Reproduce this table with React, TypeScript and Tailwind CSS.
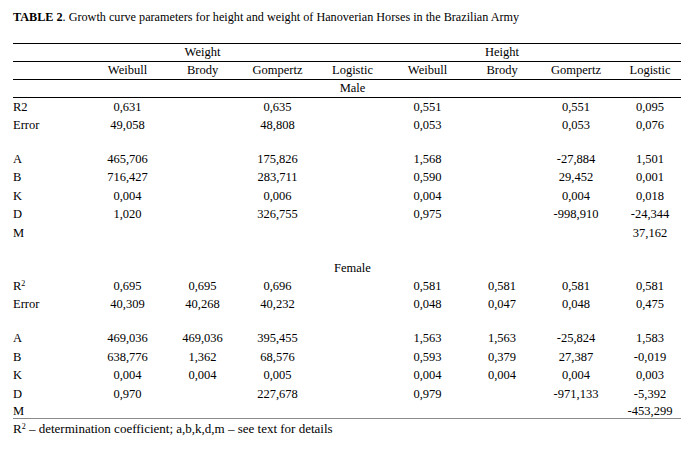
import React from "react";

type Cell = string;
const cols = "grid grid-cols-[77px_75px_75px_75px_75px_75px_74px_74px_68px]";

function Row({
  label,
  cells,
  h = "h-[18.5px]",
  extra = "",
}: {
  label: React.ReactNode;
  cells: Cell[];
  h?: string;
  extra?: string;
}) {
  return (
    <div className={`${cols} ${h} ${extra} items-center`}>
      <div className="text-left">{label}</div>
      {cells.map((c, i) => (
        <div key={i} className={`text-center whitespace-nowrap ${i === 7 ? "pl-[6px]" : ""}`}>
          {c}
        </div>
      ))}
    </div>
  );
}

const R2sup = (
  <span>
    R<sup className="text-[8px]">2</sup>
  </span>
);

export default function App() {
  return (
    <div className="w-[700px] h-[449px] bg-white text-black text-[12.5px] leading-[15px] overflow-hidden font-['Liberation_Serif','Times_New_Roman',serif]">
      <div className="pl-[13px] pt-[10px]">
        <div className="h-[15px] whitespace-nowrap text-[12.2px]">
          <span className="font-bold">TABLE 2</span>. Growth curve parameters for height and weight of Hanoverian
          Horses in the Brazilian Army
        </div>
        <div className="mt-[18px] w-[668px] border-t border-black">
          <Row label="" cells={["", "Weight", "", "", "", "Height", "", ""]} h="h-[18px]" extra="border-b border-black" />
          <Row
            label=""
            cells={["Weibull", "Brody", "Gompertz", "Logistic", "Weibull", "Brody", "Gompertz", "Logistic"]}
            h="h-[18px]"
            extra="border-b border-black"
          />
          <Row label="" cells={["", "", "", "Male", "", "", "", ""]} h="h-[18px]" extra="border-b border-black" />
          <Row label="R2" cells={["0,631", "", "0,635", "", "0,551", "", "0,551", "0,095"]} h="h-[18px]" />
          <Row label="Error" cells={["49,058", "", "48,808", "", "0,053", "", "0,053", "0,076"]} h="h-[18px]" />
          <div className="h-[16px]" />
          <Row label="A" cells={["465,706", "", "175,826", "", "1,568", "", "-27,884", "1,501"]} />
          <Row label="B" cells={["716,427", "", "283,711", "", "0,590", "", "29,452", "0,001"]} />
          <Row label="K" cells={["0,004", "", "0,006", "", "0,004", "", "0,004", "0,018"]} />
          <Row label="D" cells={["1,020", "", "326,755", "", "0,975", "", "-998,910", "-24,344"]} />
          <Row label="M" cells={["", "", "", "", "", "", "", "37,162"]} />
          <div className="h-[16.5px]" />
          <Row label="" cells={["", "", "", "Female", "", "", "", ""]} h="h-[18px]" />
          <Row label={R2sup} cells={["0,695", "0,695", "0,696", "", "0,581", "0,581", "0,581", "0,581"]} />
          <Row label="Error" cells={["40,309", "40,268", "40,232", "", "0,048", "0,047", "0,048", "0,475"]} />
          <div className="h-[15.5px]" />
          <Row label="A" cells={["469,036", "469,036", "395,455", "", "1,563", "1,563", "-25,824", "1,583"]} />
          <Row label="B" cells={["638,776", "1,362", "68,576", "", "0,593", "0,379", "27,387", "-0,019"]} />
          <Row label="K" cells={["0,004", "0,004", "0,005", "", "0,004", "0,004", "0,004", "0,003"]} />
          <Row label="D" cells={["0,970", "", "227,678", "", "0,979", "", "-971,133", "-5,392"]} />
          <Row
            label="M"
            cells={["", "", "", "", "", "", "", "-453,299"]}
            h="h-[15.5px]"
            extra="border-b border-[#8a8a8a]"
          />
        </div>
        <div className="mt-[2px] h-[15px] whitespace-nowrap text-[13px]">
          R<sup className="text-[8px]">2</sup> – determination coefficient; a,b,k,d,m – see text for details
        </div>
      </div>
    </div>
  );
}
